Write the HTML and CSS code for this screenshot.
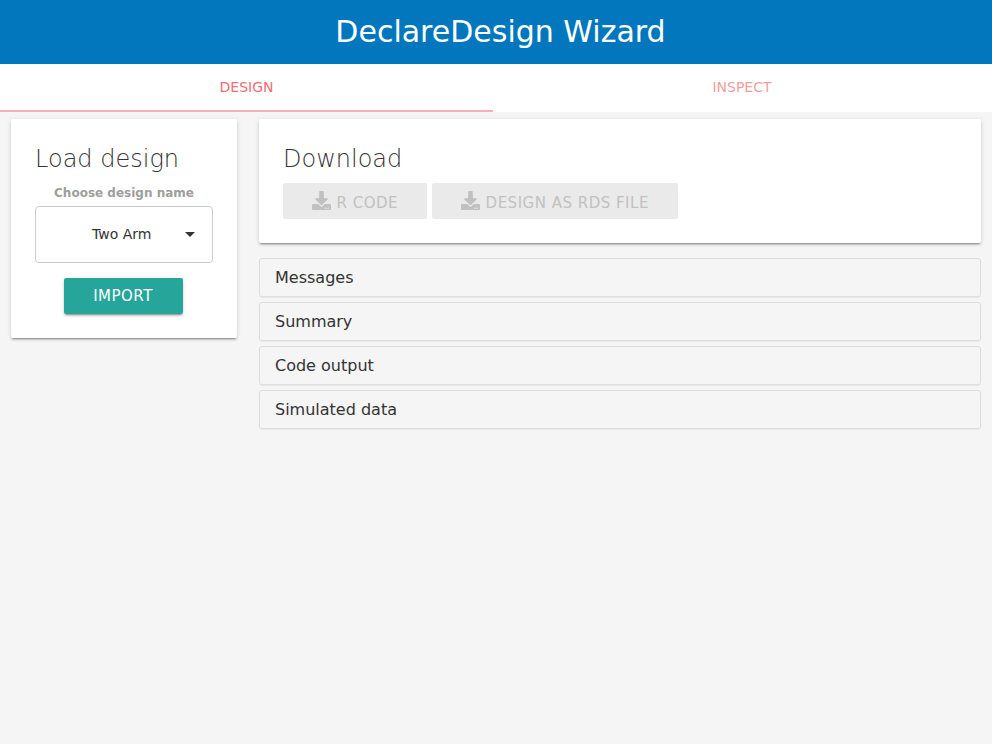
FILE: index.html
```html
<!DOCTYPE html>
<html lang="en">
<head>
<meta charset="utf-8">
<title>DeclareDesign Wizard</title>
<link rel="stylesheet" href="styles.css">
</head>
<body>
<header class="topbar"><h1>DeclareDesign Wizard</h1></header>
<nav class="tabs">
  <a class="tab active">DESIGN</a>
  <a class="tab">INSPECT</a>
</nav>
<main class="layout">
  <section class="card load">
    <h2>Load design</h2>
    <label>Choose design name</label>
    <div class="select"><span>Two Arm</span><i class="caret"></i></div>
    <button class="btn import">IMPORT</button>
  </section>
  <div class="content">
    <section class="card download">
      <h2>Download</h2>
      <div class="buttons">
        <button class="btn disabled"><svg class="icon" viewBox="0 0 512 512"><path d="M216 0h80c13.300 0 24 10.700 24 24v168h87.700c17.800 0 26.700 21.500 14.100 34.100L269.700 378.300c-7.500 7.500-19.800 7.500-27.300 0L90.100 226.100c-12.600-12.600-3.700-34.100 14.100-34.100H192V24c0-13.300 10.700-24 24-24zm296 376v112c0 13.300-10.700 24-24 24H24c-13.300 0-24-10.700-24-24V376c0-13.300 10.700-24 24-24h146.700l49 49c20.100 20.100 52.500 20.100 72.600 0l49-49H488c13.300 0 24 10.700 24 24zm-124 88c0-11-9-20-20-20s-20 9-20 20 9 20 20 20 20-9 20-20zm64 0c0-11-9-20-20-20s-20 9-20 20 9 20 20 20 20-9 20-20z"/></svg>R CODE</button>
        <button class="btn disabled"><svg class="icon" viewBox="0 0 512 512"><path d="M216 0h80c13.300 0 24 10.700 24 24v168h87.700c17.800 0 26.700 21.500 14.100 34.100L269.700 378.300c-7.500 7.500-19.800 7.500-27.300 0L90.100 226.100c-12.600-12.600-3.700-34.100 14.100-34.100H192V24c0-13.300 10.700-24 24-24zm296 376v112c0 13.300-10.700 24-24 24H24c-13.300 0-24-10.700-24-24V376c0-13.300 10.700-24 24-24h146.700l49 49c20.100 20.100 52.500 20.100 72.600 0l49-49H488c13.300 0 24 10.700 24 24zm-124 88c0-11-9-20-20-20s-20 9-20 20 9 20 20 20 20-9 20-20zm64 0c0-11-9-20-20-20s-20 9-20 20 9 20 20 20 20-9 20-20z"/></svg>DESIGN AS RDS FILE</button>
      </div>
    </section>
    <div class="panel">Messages</div>
    <div class="panel">Summary</div>
    <div class="panel">Code output</div>
    <div class="panel">Simulated data</div>
  </div>
</main>
</body>
</html>
```
FILE: styles.css
```css
* { box-sizing: border-box; }
body { margin: 0; background: #f5f5f5; color: #333; font: 14px/1.5 "DejaVu Sans", sans-serif; }
h1, h2 { margin: 0; font-weight: 400; }
.topbar { height: 64px; background: #0277bd; color: #fff; text-align: center; padding-left: 9px; }
.topbar h1 { font-size: 30px; line-height: 64px; }
.tabs { display: flex; height: 48px; background: #fff; }
.tab { flex: 1; line-height: 47px; text-align: center; color: rgba(238,110,115,.7); padding-right: 1px; }
.tab.active { flex: 0 0 493px; padding-right: 0; color: #ee6e73; border-bottom: 2px solid #f8b0b4; }
.layout { display: grid; grid-template-columns: 226px 722px; gap: 22px; padding: 7px 11px; align-items: start; }
.card { background: #fff; border-radius: 2px; padding: 24px; box-shadow: 0 2px 2px 0 rgba(0,0,0,.14), 0 1px 5px 0 rgba(0,0,0,.12), 0 3px 1px -2px rgba(0,0,0,.2); }
.card h2 { font: 200 24px/32px "DejaVu Sans", sans-serif; }
.load { height: 219px; display: flex; flex-direction: column; align-items: center; }
.load h2 { align-self: flex-start; }
.load label { font-size: 12px; line-height: 18px; font-weight: 700; color: #9e9e9e; margin-top: 9px; }
.select { width: 178px; height: 57px; margin-top: 4px; border: 1px solid #ccc; border-radius: 4px; display: flex; align-items: center; padding-left: 56px; padding-right: 17px; flex: none; justify-content: space-between; }
.caret { border: 5px solid transparent; border-top-color: #333; border-bottom: 0; }
.btn { height: 36px; border: 0; border-radius: 2px; padding: 0 28px; font: 15px/36px "DejaVu Sans", sans-serif; letter-spacing: .5px; white-space: nowrap; }
.import { width: 119px; flex: none; margin: 15px 1px 0 0; padding-right: 29px; background: #26a69a; color: #fff; box-shadow: 0 2px 2px 0 rgba(0,0,0,.14), 0 1px 5px 0 rgba(0,0,0,.12), 0 3px 1px -2px rgba(0,0,0,.2); }
.download { height: 124px; margin-bottom: 15px; }
.buttons { display: flex; gap: 5px; margin-top: 8px; }
.disabled { background: #eaeaea; color: #c1c1c1; display: flex; align-items: center; padding: 3px 28px 0 29px; }
.disabled:first-child { width: 144px; }
.disabled:last-child { width: 246px; }
.icon { width: 19px; height: 19px; margin: -4px 5.600px 0 0; fill: currentColor; flex: none; }
.panel { height: 39px; margin-bottom: 5px; border: 1px solid #ddd; border-radius: 3px; padding-left: 15px; font-size: 16px; line-height: 37px; color: #333; box-shadow: 0 1px 1px rgba(0,0,0,.05); }
```
